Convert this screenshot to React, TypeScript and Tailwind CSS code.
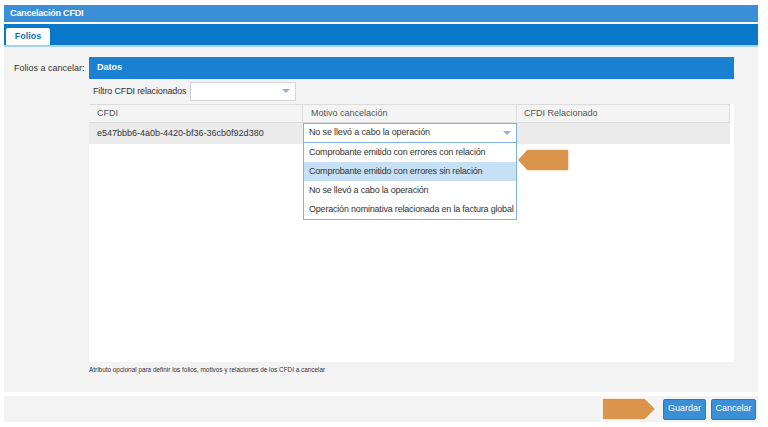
import React from "react";

const font = { fontFamily: '"Liberation Sans", Arial, sans-serif' };

const options = [
  "Comprobante emitido con errores con relación",
  "Comprobante emitido con errores sin relación",
  "No se llevó a cabo la operación",
  "Operación nominativa relacionada en la factura global",
];

function Caret() {
  return (
    <svg width="8" height="5" viewBox="0 0 8 5" className="shrink-0">
      <polygon points="0,0 8,0 4,4" fill="#8fb4d6" />
    </svg>
  );
}

export default function App() {
  return (
    <div className="w-[768px] h-[427px] bg-white text-[#333] relative" style={font}>
      <div className="flex flex-col w-[754px] ml-[4px] pt-[5px]">
        {/* title */}
        <div className="h-[17px] bg-[#3a8fd6] text-white font-bold text-[9px] tracking-[-0.2px] flex items-center pl-[6px]">
          Cancelación CFDI
        </div>
        {/* tabs */}
        <div className="mt-[2px] h-[21px] bg-[#0a78c9] flex items-end pl-[2px] border-b-2 border-[#a9d0f0] box-content">
          <div className="h-[17px] w-[44px] bg-white text-[#1a6fb5] font-bold text-[9px] flex items-center justify-center rounded-t-[2px]">
            Folios
          </div>
        </div>
        {/* content */}
        <div className="h-[345px] bg-[#f3f3f3] flex pt-[10px]">
          <div className="w-[85px] pl-[10px] pt-[5px] text-[9px] whitespace-nowrap text-[#333]">Folios a cancelar:</div>
          <div className="w-[645px] flex flex-col">
            <div className="h-[305px] flex flex-col">
              <div className="h-[22px] bg-[#1a80d1] text-white font-bold text-[9px] flex items-center pl-[8px] shrink-0">
                Datos
              </div>
              <div className="h-[25px] flex items-center pl-[4px] gap-[4px] shrink-0">
                <span className="text-[9px] tracking-[-0.15px]">Filtro CFDI relacionados</span>
                <div className="w-[106px] h-[19px] bg-white border border-[#d4d4d4] flex items-center justify-end pr-[5px]">
                  <Caret />
                </div>
              </div>
              <div className="flex-1 bg-white flex flex-col pr-[4px]">
                <div className="h-[19px] bg-[#f4f4f4] border-y border-[#dcdcdc] flex text-[9px] text-[#555] shrink-0">
                  <div className="w-[213px] pl-[8px] flex items-center">CFDI</div>
                  <div className="w-[214px] pl-[8px] flex items-center border-l border-[#dcdcdc]">Motivo cancelación</div>
                  <div className="flex-1 pl-[7px] flex items-center border-l border-r border-[#dcdcdc] font-medium">
                    CFDI Relacionado
                  </div>
                </div>
                <div className="h-[21px] bg-[#ebebeb] flex text-[9px] shrink-0">
                  <div className="w-[214px] pl-[8px] flex items-center">e547bbb6-4a0b-4420-bf36-36cb0f92d380</div>
                  <div className="w-[214px] relative">
                    <div className="h-[20px] bg-white border border-[#7fb2de] flex items-center justify-between pl-[5px] pr-[5px]">
                      <span className="tracking-[-0.15px]">No se llevó a cabo la operación</span>
                      <Caret />
                    </div>
                    <div className="absolute left-0 top-[20px] w-[214px] bg-white border border-[#7fb2de] border-t-0 z-10">
                      {options.map((o, i) => (
                        <div
                          key={o}
                          className={
                            "h-[19px] flex items-center pl-[5px] text-[9px] tracking-[-0.2px] whitespace-nowrap " +
                            (i === 1 ? "bg-[#c6e0f5]" : "bg-white")
                          }
                        >
                          {o}
                        </div>
                      ))}
                    </div>
                  </div>
                  <div className="flex-1" />
                </div>
              </div>
            </div>
            <div className="pt-[3px] text-[6.4px] text-[#333]">
              Atributo opcional para definir los folios, motivos y relaciones de los CFDI a cancelar
            </div>
          </div>
        </div>
        {/* footer */}
        <div className="mt-[4px] h-[26px] bg-[#f3f3f3] flex items-center justify-end gap-[5px] pr-[2px]">
          <button className="h-[21px] w-[43px] bg-[#3a8fd6] border border-[#2c78bd] rounded-[2px] text-white text-[9px]">
            Guardar
          </button>
          <button className="h-[21px] w-[45px] bg-[#3a8fd6] border border-[#2c78bd] rounded-[2px] text-white text-[9px]">
            Cancelar
          </button>
        </div>
      </div>

      {/* orange markers */}
      <svg className="absolute left-[516px] top-[148px]" width="54" height="24" viewBox="0 0 54 24">
        <polygon points="1,12 11,1 53,1 53,23 11,23" fill="#da944c" stroke="#ffffff" strokeWidth="1.5" />
      </svg>
      <svg className="absolute left-[601px] top-[397px]" width="56" height="24" viewBox="0 0 56 24">
        <polygon points="1,1 44,1 55,12 44,23 1,23" fill="#da944c" stroke="#ffffff" strokeWidth="1.5" />
      </svg>
    </div>
  );
}
